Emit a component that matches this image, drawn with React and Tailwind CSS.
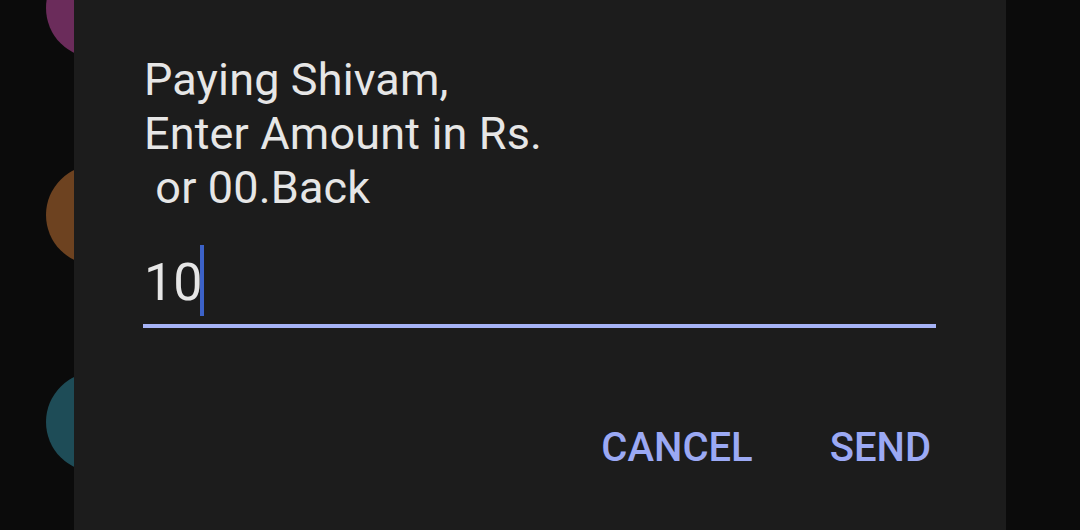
export default function App() {
  const avatars = ['bg-[#6b2c5b]', 'bg-[#6d4220]', 'bg-[#1e4c57]'];

  return (
    <div
      className="relative h-[530px] w-[1080px] overflow-hidden bg-[#0b0b0b]"
      style={{ fontFamily: 'Roboto, "Noto Sans", sans-serif' }}
    >
      {/* contact list behind the dialog */}
      <div className="-mt-[42px] flex flex-col gap-[107px] pl-[46px]">
        {avatars.map((c, i) => (
          <div key={i} className={`h-[100px] w-[100px] rounded-full ${c}`} />
        ))}
      </div>

      {/* dialog */}
      <div className="absolute left-[74px] top-0 flex h-full w-[932px] flex-col bg-[#1c1c1c] pl-[70px] pr-[69px] pt-[53px]">
        <p className="whitespace-pre text-[45px] leading-[54px] tracking-[0.15px] text-[#e6e6e6]">
          {'Paying Shivam,\nEnter Amount in Rs.\n or 00.Back'}
        </p>

        <div className="mt-[30px] flex items-start">
          <span className="mt-[2px] text-[52px] leading-[71px] text-[#e6e6e6]">10</span>
          <span className="-ml-[2px] h-[71px] w-[4px] bg-[#3c62c8]" />
        </div>
        <div className="-ml-px mt-[6px] h-[4px] w-full bg-[#a6b3f6]" />

        <div className="mt-[100px] flex justify-end gap-[77px] pr-[6px]">
          <button className="text-[40px] font-medium leading-[40px] text-[#9ba9f4]">CANCEL</button>
          <button className="text-[40px] font-medium leading-[40px] text-[#9ba9f4]">SEND</button>
        </div>
      </div>
    </div>
  );
}
